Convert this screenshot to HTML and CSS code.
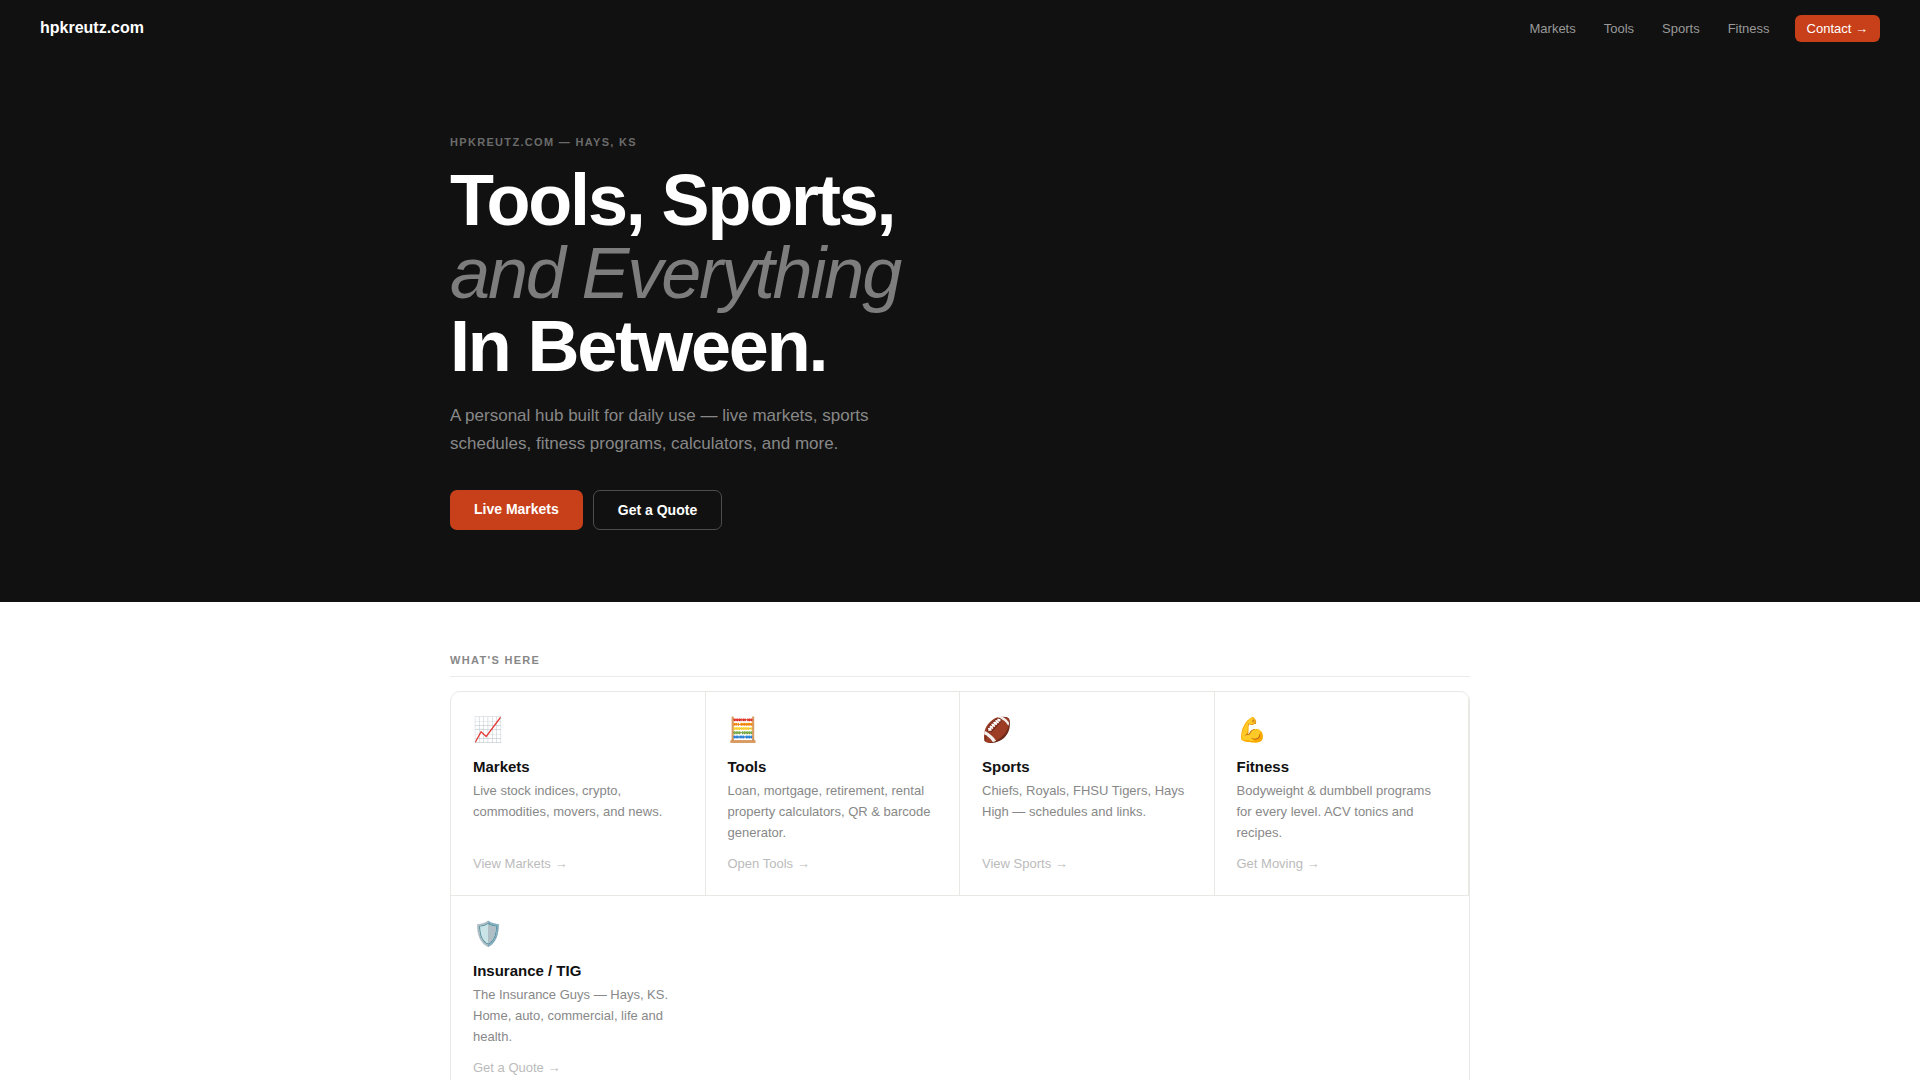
FILE: index.html
```html
<!DOCTYPE html>
<html lang="en">
<head>
    <meta charset="UTF-8">
    <meta name="viewport" content="width=device-width, initial-scale=1.0">
    <title>hpkreutz.com</title>
    <link rel="stylesheet" href="styles.css">
</head>
<body>
    <nav class="nav">
        <a class="nav-logo" href="#">hpkreutz.com</a>
        <div class="nav-links">
            <a href="#markets">Markets</a>
            <a href="#tools">Tools</a>
            <a href="#sports">Sports</a>
            <a href="#fitness">Fitness</a>
            <a class="nav-cta" href="#contact">Contact →</a>
        </div>
    </nav>

    <header class="hero">
        <div class="container">
            <div class="hero-label">hpkreutz.com — Hays, KS</div>
            <h1>Tools, Sports,<br><em>and Everything</em><br>In Between.</h1>
            <p class="hero-text">A personal hub built for daily use — live markets, sports schedules, fitness programs, calculators, and more.</p>
            <div class="hero-buttons">
                <a class="btn btn-primary" href="#markets">Live Markets</a>
                <a class="btn btn-outline" href="#quote">Get a Quote</a>
            </div>
        </div>
    </header>

    <main class="section">
        <div class="container">
            <h2 class="section-label">What's Here</h2>
            <div class="grid">
                <a class="card" id="markets" href="#markets">
                    <span class="card-icon">📈</span>
                    <span class="card-title">Markets</span>
                    <span class="card-desc">Live stock indices, crypto, commodities, movers, and news.</span>
                    <span class="card-link">View Markets →</span>
                </a>
                <a class="card" id="tools" href="#tools">
                    <span class="card-icon">🧮</span>
                    <span class="card-title">Tools</span>
                    <span class="card-desc">Loan, mortgage, retirement, rental property calculators, QR &amp; barcode generator.</span>
                    <span class="card-link">Open Tools →</span>
                </a>
                <a class="card" id="sports" href="#sports">
                    <span class="card-icon">🏈</span>
                    <span class="card-title">Sports</span>
                    <span class="card-desc">Chiefs, Royals, FHSU Tigers, Hays High — schedules and links.</span>
                    <span class="card-link">View Sports →</span>
                </a>
                <a class="card" id="fitness" href="#fitness">
                    <span class="card-icon">💪</span>
                    <span class="card-title">Fitness</span>
                    <span class="card-desc">Bodyweight &amp; dumbbell programs for every level. ACV tonics and recipes.</span>
                    <span class="card-link">Get Moving →</span>
                </a>
                <a class="card card-last" id="quote" href="#quote">
                    <span class="card-icon">🛡️</span>
                    <span class="card-title">Insurance / TIG</span>
                    <span class="card-desc">The Insurance Guys — Hays, KS. Home, auto, commercial, life and health.</span>
                    <span class="card-link">Get a Quote →</span>
                </a>
            </div>
        </div>
    </main>
</body>
</html>
```
FILE: styles.css
```css
* {
    box-sizing: border-box;
    margin: 0;
    padding: 0;
}
body {
    font-family: "Liberation Sans", Arial, sans-serif;
    background: #fff;
    color: #111;
}
a {
    text-decoration: none;
    color: inherit;
}
.container {
    max-width: 1100px;
    margin: 0 auto;
    padding: 0 40px;
}

/* Nav */
.nav {
    display: flex;
    align-items: center;
    justify-content: space-between;
    height: 56px;
    padding: 0 40px;
    background: #111;
}
.nav-logo {
    font-size: 16px;
    font-weight: bold;
    color: #fff;
}
.nav-links {
    display: flex;
    align-items: center;
    gap: 4px;
}
.nav-links a {
    padding: 6px 12px;
    font-size: 13px;
    line-height: 15px;
    color: #999;
}
.nav-links .nav-cta {
    margin-left: 9px;
    border-radius: 6px;
    background: #c8401a;
    color: #fff;
}

/* Hero */
.hero {
    padding: 80px 0 72px;
    background: #111;
}
.hero-label,
.section-label {
    font-size: 11px;
    font-weight: bold;
    line-height: 12px;
    letter-spacing: 0.12em;
    text-transform: uppercase;
}
.hero-label {
    margin-bottom: 16px;
    color: #6b6b6b;
}
h1 {
    margin-bottom: 19px;
    font-size: 72px;
    line-height: 73px;
    letter-spacing: -0.03em;
    color: #fff;
}
h1 em {
    font-weight: normal;
    color: #7d7d7d;
}
.hero-text {
    max-width: 480px;
    margin-bottom: 32px;
    font-size: 17px;
    line-height: 28px;
    color: #888;
}
.hero-buttons {
    display: flex;
    gap: 10px;
}
.btn {
    padding: 11px 24px;
    border-radius: 7px;
    font-size: 14px;
    font-weight: bold;
    line-height: 16px;
    color: #fff;
}
.btn-primary {
    background: #c8401a;
}
.btn-outline {
    border: 1px solid #4d4d4d;
}

/* Cards */
.section {
    padding: 52px 0;
}
.section-label {
    margin-bottom: 14px;
    padding-bottom: 10px;
    border-bottom: 1px solid #ebebe8;
    color: #888;
}
.grid {
    display: grid;
    grid-template-columns: repeat(4, 1fr);
    border: 1px solid #e8e8e4;
    border-radius: 10px;
    overflow: hidden;
}
.card {
    display: flex;
    flex-direction: column;
    padding: 24px 22px;
    border-right: 1px solid #e8e8e4;
    border-bottom: 1px solid #e8e8e4;
}
.card-last {
    border-right: none;
    border-bottom: none;
}
.card-icon {
    margin-bottom: 14px;
    font-size: 24px;
    line-height: 28px;
}
.card-title {
    margin-bottom: 5px;
    font-size: 15px;
    font-weight: bold;
    line-height: 17px;
}
.card-desc {
    flex: 1;
    font-size: 13px;
    line-height: 21px;
    color: #888;
}
.card-link {
    margin-top: 13px;
    font-size: 13px;
    line-height: 15px;
    color: #bbb;
}
```
